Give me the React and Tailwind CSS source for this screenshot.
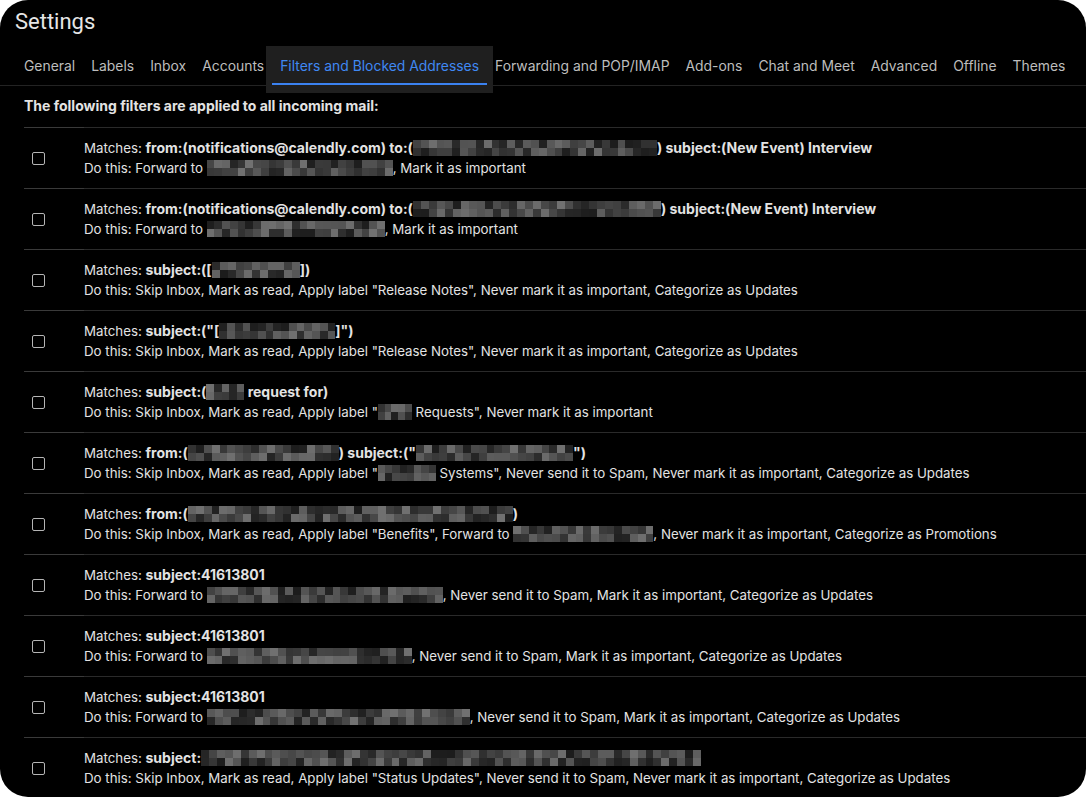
import React from 'react';

const tabs = [
  'General',
  'Labels',
  'Inbox',
  'Accounts',
  'Filters and Blocked Addresses',
  'Forwarding and POP/IMAP',
  'Add-ons',
  'Chat and Meet',
  'Advanced',
  'Offline',
  'Themes',
];

// pixelated redaction block
function Blur({ w, seed = 1 }) {
  const cols = Math.ceil(w / 8);
  const cells = [];
  for (let r = 0; r < 2; r++) {
    for (let c = 0; c < cols; c++) {
      const n = Math.sin((c + 1) * 12.9898 + (r + 1) * 78.233 + seed * 37.719) * 43758.5453;
      const f = n - Math.floor(n);
      const g = Math.round(28 + f * 86);
      cells.push(
        <span
          key={`${r}-${c}`}
          className="block h-2"
          style={{ background: `rgb(${g},${g},${g})` }}
        />
      );
    }
  }
  return (
    <span
      className="mt-[2px] inline-grid h-4 align-top overflow-hidden"
      style={{ width: w, gridTemplateColumns: `repeat(${cols}, 1fr)` }}
    >
      {cells}
    </span>
  );
}

const B = ({ children }) => <span className="text-[14px] font-bold">{children}</span>;

const filters = [
  {
    match: (
      <>
        <B>from:(notifications@calendly.com) to:(</B>
        <Blur w={244} seed={1} />
        <B>) subject:(New Event) Interview</B>
      </>
    ),
    action: (
      <>
        Forward to <Blur w={186} seed={2} />, Mark it as important
      </>
    ),
  },
  {
    match: (
      <>
        <B>from:(notifications@calendly.com) to:(</B>
        <Blur w={248} seed={3} />
        <B>) subject:(New Event) Interview</B>
      </>
    ),
    action: (
      <>
        Forward to <Blur w={178} seed={4} />, Mark it as important
      </>
    ),
  },
  {
    match: (
      <>
        <B>subject:([</B>
        <Blur w={88} seed={5} />
        <B>])</B>
      </>
    ),
    action: (
      <>Skip Inbox, Mark as read, Apply label "Release Notes", Never mark it as important, Categorize as Updates</>
    ),
  },
  {
    match: (
      <>
        <B>subject:("[</B>
        <Blur w={116} seed={6} />
        <B>]")</B>
      </>
    ),
    action: (
      <>Skip Inbox, Mark as read, Apply label "Release Notes", Never mark it as important, Categorize as Updates</>
    ),
  },
  {
    match: (
      <>
        <B>subject:(</B>
        <Blur w={38} seed={7} />
        <B> request for)</B>
      </>
    ),
    action: (
      <>
        Skip Inbox, Mark as read, Apply label "<Blur w={34} seed={8} /> Requests", Never mark it as important
      </>
    ),
  },
  {
    match: (
      <>
        <B>from:(</B>
        <Blur w={151} seed={9} />
        <B>) subject:("</B>
        <Blur w={157} seed={10} />
        <B>")</B>
      </>
    ),
    action: (
      <>
        Skip Inbox, Mark as read, Apply label "<Blur w={58} seed={11} /> Systems", Never send it to Spam, Never mark
        it as important, Categorize as Updates
      </>
    ),
  },
  {
    match: (
      <>
        <B>from:(</B>
        <Blur w={325} seed={12} />
        <B>)</B>
      </>
    ),
    action: (
      <>
        Skip Inbox, Mark as read, Apply label "Benefits", Forward to <Blur w={140} seed={13} />, Never mark it as
        important, Categorize as Promotions
      </>
    ),
  },
  {
    match: <B>subject:41613801</B>,
    action: (
      <>
        Forward to <Blur w={236} seed={14} />, Never send it to Spam, Mark it as important, Categorize as Updates
      </>
    ),
  },
  {
    match: <B>subject:41613801</B>,
    action: (
      <>
        Forward to <Blur w={205} seed={15} />, Never send it to Spam, Mark it as important, Categorize as Updates
      </>
    ),
  },
  {
    match: <B>subject:41613801</B>,
    action: (
      <>
        Forward to <Blur w={263} seed={16} />, Never send it to Spam, Mark it as important, Categorize as Updates
      </>
    ),
  },
  {
    match: (
      <>
        <B>subject:</B>
        <Blur w={500} seed={17} />
      </>
    ),
    action: (
      <>
        Skip Inbox, Mark as read, Apply label "Status Updates", Never send it to Spam, Never mark it as important,
        Categorize as Updates
      </>
    ),
  },
];

export default function App() {
  return (
    <div className="bg-white w-[1086px] h-[797px]">
      <div
        className="h-full w-full overflow-hidden rounded-[28px] bg-black text-[#e3e3e3]"
        style={{ fontFamily: 'Inter, Roboto, "Liberation Sans", sans-serif' }}
      >
        <h1
          className="pl-[15px] pt-[8px] pb-[10px] text-[22px] leading-[28px] text-[#e6e6e6]"
          style={{ fontFamily: 'Roboto, "Liberation Sans", sans-serif' }}
        >
          Settings
        </h1>

        <div className="flex h-[40px] items-start border-b border-[#232323] pl-4 text-[13.9px]">
          {tabs.map((t) =>
            t === 'Filters and Blocked Addresses' ? (
              <div
                key={t}
                className="relative z-10 -mx-[6px] h-[47px] bg-[#1f1f1f] px-[14px] leading-[40px] text-[#3f88f2]"
              >
                {t}
                <span className="absolute left-[6px] right-[6px] top-[37px] h-[2px] bg-[#3b82f0]" />
              </div>
            ) : (
              <div key={t} className="px-2 leading-[40px] text-[#bdbdbd]">
                {t}
              </div>
            )
          )}
        </div>

        <div className="pl-6">
          <p className="pt-[10px] pb-[11px] text-[14px] font-bold leading-5 text-[#e3e3e3]">
            The following filters are applied to all incoming mail:
          </p>
          {filters.map((f, i) => (
            <div key={i} className="flex h-[61px] text-[13.3px] leading-5">
              <div className="flex w-[60px] shrink-0 items-center border-t border-[#3a3a3a] pl-2">
                <span className="block h-[13px] w-[13px] rounded-[2px] border border-[#b5b5b5]" />
              </div>
              <div className="flex flex-1 flex-col justify-center whitespace-nowrap border-t border-[#2a2a2a]">
                <div>Matches: {f.match}</div>
                <div>Do this: {f.action}</div>
              </div>
            </div>
          ))}
        </div>
      </div>
    </div>
  );
}
